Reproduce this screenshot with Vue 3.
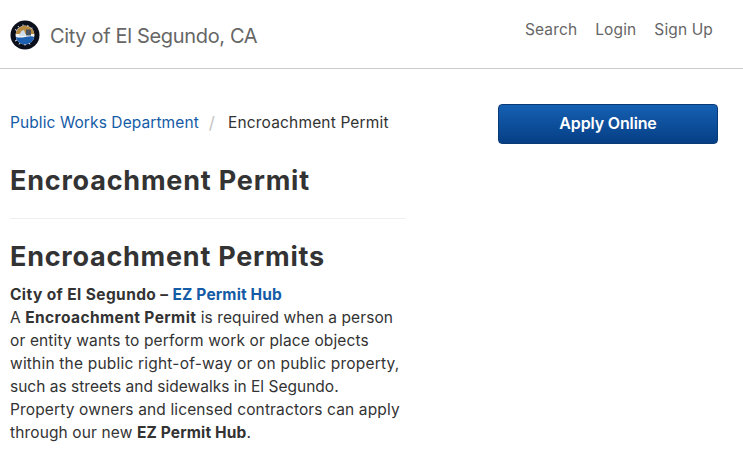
<script setup>
const navItems = ['Search', 'Login', 'Sign Up']
</script>

<template>
  <div class="page">
    <header class="header">
      <a class="brand">
        <svg class="seal" viewBox="0 0 30 30" width="30" height="30">
          <circle cx="15" cy="15" r="14.5" fill="#0b0f1c" />
          <circle cx="15" cy="15" r="9.5" fill="#f2f4f6" />
          <path d="M5.6 14a9.5 9.5 0 0 1 18.8 0z" fill="#b5893f" />
          <path d="M5.7 17a9.5 9.5 0 0 0 18.6 0c-3-1.5-6-.5-9 0s-6.500 1-9.600 0z" fill="#1d5fb0" />
          <path d="M9 16c1-4 3-6 5-6l2 6z" fill="#cfdcec" />
          <rect x="16" y="9.500" width="5" height="6" fill="#4a5260" />
          <path d="M5 9.500l2 1M8 6l1 1.500M13 4.500v1.500M18 5l-.5 1.500M22 7.500l-1 1M5 21l2-1M9 24.500l1-1.500M15 25.500V24M20 24.500l-1-1.500" stroke="#dfe3e8" stroke-width="1" fill="none" />
        </svg>
        <span class="city">City of El Segundo, CA</span>
      </a>
      <nav class="nav">
        <a v-for="item in navItems" :key="item" class="nav-link">{{ item }}</a>
      </nav>
    </header>

    <main class="content">
      <div class="main-col">
        <div class="crumbs">
          <a class="link">Public Works Department</a>
          <span class="sep">/</span>
          <span class="current">Encroachment Permit</span>
        </div>
        <h1 class="title">Encroachment Permit</h1>
        <hr class="rule" />
        <h2 class="subtitle">Encroachment Permits</h2>
        <p class="body">
          <strong>City of El Segundo – </strong><a class="link hub">EZ Permit Hub</a><br />
          <span class="snug">A <strong>Encroachment Permit</strong> is required when a person</span><br />
          or entity wants to perform work or place objects<br />
          <span class="wide">within the public right-of-way or on public property,</span><br />
          <span class="tight">such as streets and sidewalks in El Segundo.</span><br />
          Property owners and licensed contractors can apply<br />
          through our new <strong class="hub">EZ Permit Hub</strong>.
        </p>
      </div>
      <aside class="side">
        <button class="apply">Apply Online</button>
      </aside>
    </main>
  </div>
</template>

<style>
html, body { margin: 0; background: #fff; overflow: hidden; }
</style>

<style scoped>
.page {
  width: 743px;
  height: 449px;
  overflow: hidden;
  font-family: Inter, "Liberation Sans", sans-serif;
  color: #333;
}
.header {
  height: 68px;
  border-bottom: 1px solid #ccc;
  display: flex;
  align-items: center;
  justify-content: space-between;
  padding: 0 30px 0 10px;
}
.brand { display: flex; align-items: center; gap: 10px; }
.seal { display: block; margin-top: 1px; }
.city { font-size: 20px; color: #666; letter-spacing: -0.34px; margin-top: 4px; }
.nav { display: flex; gap: 18px; margin-bottom: 10px; }
.nav-link { font-size: 15.500px; color: #666; letter-spacing: 0.13px; }
.content {
  display: flex;
  padding: 0 25px 0 10px;
  justify-content: space-between;
}
.main-col { width: 395px; }
.crumbs {
  margin-top: 44px;
  font-size: 15.500px;
  line-height: 20px;
  display: flex;
  letter-spacing: 0.09px;
}
.link { color: #155ba6; }
.sep { color: #c4c4c4; font-size: 17px; margin: 0 13px 0 10px; }
.current { color: #333; letter-spacing: 0.16px; }
.title {
  margin: 31px 0 0;
  font-size: 27px;
  line-height: 34px;
  font-weight: 700;
  letter-spacing: 0.79px;
}
.rule {
  margin: 20px 0 0;
  border: 0;
  border-top: 1px solid #eee;
}
.subtitle {
  margin: 21px 0 0;
  font-size: 27px;
  line-height: 34px;
  font-weight: 700;
  letter-spacing: 0.75px;
}
.body {
  margin: 9px 0 0;
  font-size: 15.500px;
  line-height: 23px;
  white-space: nowrap;
  letter-spacing: 0.13px;
}
.body strong { font-weight: 700; letter-spacing: 0.4px; }
.body .hub { font-weight: 700; letter-spacing: 0.14px; }
.snug { letter-spacing: 0.08px; }
.wide { letter-spacing: 0.2px; }
.tight { letter-spacing: 0.01px; }
.side { padding-top: 35px; }
.apply {
  width: 220px;
  height: 40px;
  border: 1px solid #0a3a75;
  border-radius: 4px;
  padding: 0 0 2px;
  background: linear-gradient(#1560b3, #063f85);
  color: #fff;
  font: 600 16px Inter, "Liberation Sans", sans-serif;
  letter-spacing: -0.15px;
}
</style>
